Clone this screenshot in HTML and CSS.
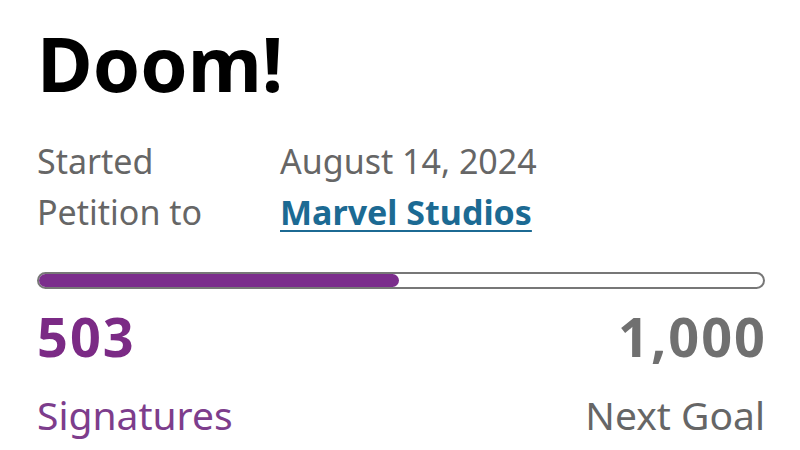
FILE: index.html
```html
<!DOCTYPE html>
<html>
<head>
<meta charset="utf-8">
<link rel="stylesheet" href="styles.css">
</head>
<body>
<main class="petition">
  <h1 class="title">Doom!</h1>
  <div class="details">
    <div class="label">Started</div>
    <div class="value">August 14, 2024</div>
    <div class="label">Petition to</div>
    <div class="value"><a class="target" href="#">Marvel Studios</a></div>
  </div>
  <div class="progress"><div class="fill" style="width: 49.7%"></div></div>
  <div class="stats">
    <div class="stat">
      <div class="num num-sig">503</div>
      <div class="cap cap-sig">Signatures</div>
    </div>
    <div class="stat stat-right">
      <div class="num num-goal">1,000</div>
      <div class="cap cap-goal">Next Goal</div>
    </div>
  </div>
</main>
</body>
</html>
```
FILE: styles.css
```css
* { box-sizing: border-box; }
html, body { margin: 0; padding: 0; background: #fff; }
body { font-family: "Noto Sans", "Open Sans", sans-serif; }
.petition {
  width: 800px;
  padding: 15px 35px 0 37px;
}
.title {
  margin: 0;
  font-size: 76px;
  line-height: 96px;
  font-weight: 700;
  color: #000;
}
.details {
  margin-top: 25px;
  display: grid;
  grid-template-columns: 243px 1fr;
  font-size: 34px;
  line-height: 51px;
  color: #666;
}
.target {
  color: #1c6a93;
  font-weight: 700;
  text-decoration: underline;
  text-underline-offset: 5px;
  text-decoration-thickness: 2px;
}
.progress {
  margin-top: 34px;
  height: 17px;
  border: 2px solid #777;
  border-radius: 9px;
  overflow: hidden;
}
.fill {
  height: 100%;
  background: #7b2d8c;
  border-radius: 0 9px 9px 0;
}
.stats {
  display: flex;
  justify-content: space-between;
  margin-top: 17px;
}
.stat-right { text-align: right; }
.num {
  font-size: 54px;
  font-weight: 700;
  line-height: 60px;
  letter-spacing: 2px;
}
.num-sig { color: #7b2a85; }
.num-goal { color: #707070; margin-right: -2px; }
.cap {
  margin-top: 24px;
  font-size: 39px;
  line-height: 50px;
}
.cap-sig { color: #7d3d8c; }
.cap-goal { color: #666; }
```
